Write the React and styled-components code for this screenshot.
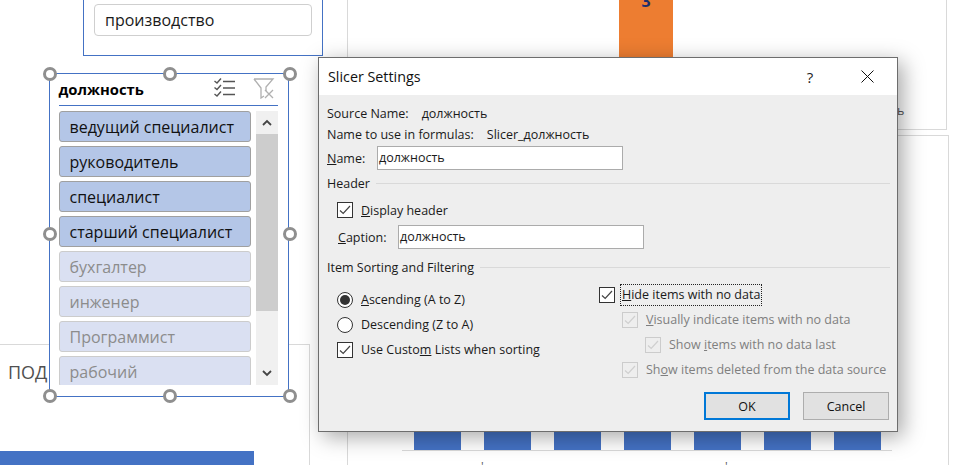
import React from "react";
import styled, { createGlobalStyle } from "styled-components";

const Global = createGlobalStyle`
  html, body { margin: 0; padding: 0; background: #fff; }
  body { font-family: "Open Sans", "Noto Sans", sans-serif; }
`;

const Canvas = styled.div`
  position: relative;
  width: 955px;
  height: 465px;
  overflow: hidden;
  background: #fff;
`;

const ChartPanel = styled.div`
  position: absolute;
  left: ${(p) => p.$x}px;
  top: ${(p) => p.$y}px;
  width: ${(p) => p.$w}px;
  height: ${(p) => p.$h}px;
  box-sizing: border-box;
  border: 1px solid #d9d9d9;
`;

const PanelTitle = styled.div`
  position: absolute;
  left: 12px;
  top: 15px;
  font-size: 18px;
  line-height: 24px;
  color: #505050;
`;

const BlueStrip = styled.div`
  position: absolute;
  left: 0;
  top: 451px;
  width: 254px;
  height: 14px;
  background: #4472c4;
`;

const OrangeBar = styled.div`
  position: absolute;
  left: 619px;
  top: 0;
  width: 54px;
  height: 57px;
  background: #ed7d31;
  display: flex;
  justify-content: center;
`;

const BarValue = styled.span`
  margin-top: -8px;
  font-size: 16px;
  line-height: 18px;
  font-weight: 700;
  color: #1f2f6b;
`;

const BarRow = styled.div`
  position: absolute;
  left: 402px;
  top: 425px;
  width: 490px;
  height: 26px;
  box-sizing: border-box;
  border-bottom: 1px solid #d9d9d9;
  padding-left: 12px;
  display: flex;
  gap: 23px;
`;

const Bar = styled.div`
  width: 47px;
  height: 25px;
  background: #4472c4;
`;

const AxisTick = styled.span`
  position: absolute;
  left: ${(p) => p.$x}px;
  top: 460px;
  font-size: 12px;
  line-height: 14px;
  color: #595959;
`;

const CutLetter = styled.span`
  position: absolute;
  left: 897px;
  top: 103px;
  font-size: 12.5px;
  line-height: 16px;
  color: #595959;
`;

const FilterCard = styled.div`
  position: absolute;
  left: 83px;
  top: -20px;
  width: 240px;
  height: 76px;
  box-sizing: border-box;
  border: 1px solid #4472c4;
  background: #fff;
  padding: 23px 10px 0;
`;

const FilterChip = styled.div`
  height: 32px;
  box-sizing: border-box;
  border: 1px solid #cfcfcf;
  border-radius: 4px;
  padding-left: 10px;
  font-size: 16px;
  line-height: 30px;
  color: #1a1a1a;
`;

const Slicer = styled.div`
  position: absolute;
  left: 49px;
  top: 73px;
  width: 240px;
  height: 324px;
  box-sizing: border-box;
  border: 1.5px solid #4472c4;
  background: #fff;
  padding: 0 10.5px 0 8.5px;
`;

const SlicerHeader = styled.div`
  height: 32px;
  box-sizing: border-box;
  border-bottom: 1px solid #4472c4;
  padding-bottom: 2px;
  display: flex;
  align-items: center;
`;

const SlicerTitle = styled.span`
  flex: 1;
  font-size: 14.8px;
  font-weight: 700;
  color: #000;
`;

const IconGroup = styled.div`
  display: flex;
  gap: 18px;
  margin-right: 3px;
`;

const SlicerBody = styled.div`
  margin-top: 5px;
  height: 274px;
  display: flex;
  gap: 5px;
`;

const ItemList = styled.div`
  flex: 1;
  overflow: hidden;
  display: flex;
  flex-direction: column;
  gap: 4px;
`;

const Item = styled.div`
  flex: none;
  height: 31px;
  box-sizing: border-box;
  border: 1px solid ${(p) => (p.$on ? "#a0a0a0" : "#cccccc")};
  border-radius: 3px;
  background: ${(p) => (p.$on ? "#b4c6e7" : "#dae0f2")};
  color: ${(p) => (p.$on ? "#111" : "#8c8c8c")};
  padding-left: 10px;
  font-size: 16px;
  line-height: 30px;
  white-space: nowrap;
`;

const ScrollBar = styled.div`
  width: 22px;
  background: #f0f0f0;
  display: flex;
  flex-direction: column;
`;

const ScrollArrow = styled.div`
  height: 23px;
  display: flex;
  align-items: center;
  justify-content: center;
`;

const ScrollThumb = styled.div`
  height: 177px;
  background: #cdcdcd;
`;

const ScrollRest = styled.div`
  flex: 1;
`;

const Handle = styled.div`
  position: absolute;
  left: ${(p) => p.$x - 7}px;
  top: ${(p) => p.$y - 7}px;
  width: 14px;
  height: 14px;
  box-sizing: border-box;
  border: 3px solid #8f8f8f;
  border-radius: 50%;
  background: #fff;
`;

const Dialog = styled.div`
  position: absolute;
  left: 318px;
  top: 57px;
  width: 580px;
  height: 375px;
  box-sizing: border-box;
  border: 1px solid #6d6d6d;
  background: #eeeeee;
  box-shadow: 5px 5px 20px rgba(0, 0, 0, 0.35);
  display: flex;
  flex-direction: column;
  font-size: 12.5px;
  color: #1a1a1a;
`;

const TitleBar = styled.div`
  height: 37px;
  background: #fff;
  display: flex;
  align-items: center;
  padding-left: 9px;
`;

const TitleText = styled.span`
  flex: 1;
  font-size: 14.3px;
  color: #111;
`;

const HelpButton = styled.span`
  width: 20px;
  margin-right: 41px;
  text-align: center;
  font-size: 15px;
  color: #222;
`;

const CloseButton = styled.span`
  display: flex;
  margin-right: 23px;
`;

const DialogBody = styled.div`
  flex: 1;
  display: flex;
  flex-direction: column;
  padding: 8px 7px 0 8px;
`;

const InfoRow = styled.div`
  height: 21px;
  display: flex;
  align-items: center;
  white-space: nowrap;
`;

const InfoValue = styled.span`
  margin-left: ${(p) => p.$gap}px;
`;

const FieldRow = styled.div`
  height: 24px;
  margin-top: ${(p) => p.$mt || 0}px;
  padding-left: ${(p) => p.$indent || 0}px;
  display: flex;
  align-items: center;
`;

const FieldLabel = styled.label`
  width: ${(p) => p.$w}px;
  flex: none;
`;

const TextInput = styled.div`
  width: 246px;
  height: 24px;
  box-sizing: border-box;
  border: 1px solid #ababab;
  background: #fff;
  padding-left: 1px;
  line-height: 21px;
`;

const SectionHead = styled.div`
  height: 20px;
  margin-top: ${(p) => p.$mt}px;
  display: flex;
  align-items: center;
  gap: 6px;
`;

const SectionRule = styled.div`
  flex: 1;
  height: 1px;
  background: #d9d9d9;
`;

const OptionRow = styled.div`
  height: 25px;
  margin-left: ${(p) => p.$indent || 0}px;
  display: flex;
  align-items: center;
  gap: 8px;
  white-space: nowrap;
  color: ${(p) => (p.$off ? "#7f7f7f" : "inherit")};
`;

const OptionLabel = styled.span`
  margin-left: 8px;
`;

const Box = styled.span`
  width: 16px;
  height: 16px;
  flex: none;
  box-sizing: border-box;
  border: 1px solid ${(p) => (p.$off ? "#cccccc" : "#333")};
  background: ${(p) => (p.$off ? "#eeeeee" : "#fff")};
  display: flex;
  align-items: center;
  justify-content: center;
`;

const Radio = styled.span`
  width: 16px;
  height: 16px;
  flex: none;
  box-sizing: border-box;
  border: 1px solid #333;
  border-radius: 50%;
  background: #fff;
  display: flex;
  align-items: center;
  justify-content: center;
`;

const RadioDot = styled.span`
  width: 10px;
  height: 10px;
  border-radius: 50%;
  background: #333;
`;

const FocusLabel = styled.span`
  margin-left: -2px;
  padding: 2px 1px;
  outline: 1px dotted #222;
  line-height: 16px;
`;

const Columns = styled.div`
  display: flex;
  margin-top: 5px;
`;

const LeftColumn = styled.div`
  width: 272px;
  padding: 5px 0 0 10px;
  box-sizing: border-box;
`;

const RightColumn = styled.div`
  flex: 1;
`;

const ButtonRow = styled.div`
  display: flex;
  justify-content: flex-end;
  gap: 13px;
  margin: 10px 1px 0 0;
`;

const DialogButton = styled.button`
  width: 86px;
  height: 28px;
  box-sizing: border-box;
  padding: 0;
  border: ${(p) => (p.$primary ? "2px solid #0078d7" : "1px solid #adadad")};
  background: #e1e1e1;
  font: inherit;
  color: #111;
`;

const Check = ({ off }) => (
  <svg width="12" height="10" viewBox="0 0 12 10" fill="none">
    <path d="M1 5.5 L4.2 8.5 L11 1" stroke={off ? "#cfcfcf" : "#444"} strokeWidth="1.2" />
  </svg>
);

const MultiSelectIcon = () => (
  <svg width="21" height="20" viewBox="0 0 21 20" fill="none" stroke="#555" strokeWidth="1.4">
    <path d="M0.5 3 L3 5 L7 0.5 M0.5 9.5 L3 11.5 L7 7 M0.5 16 L3 18 L7 13.5" />
    <path d="M9 3.5 H21 M9 10 H21 M9 16.5 H21" strokeWidth="1.6" />
  </svg>
);

const ClearFilterIcon = () => (
  <svg width="22" height="21" viewBox="0 0 22 21" fill="none" stroke="#b0b0b0" strokeWidth="1.3">
    <path d="M1 1 H20 L13 9 V13 M8 10 L1 1 M8 9.5 V20 L11 18" />
    <path d="M12 12 L20 20 M20 12 L12 20" />
  </svg>
);

const CloseIcon = () => (
  <svg width="13" height="13" viewBox="0 0 13 13" fill="none" stroke="#111" strokeWidth="1">
    <path d="M0.5 0.5 L12.5 12.5 M12.5 0.5 L0.5 12.5" />
  </svg>
);

const Chevron = ({ down }) => (
  <svg width="10" height="7" viewBox="0 0 10 7" fill="none" stroke="#444" strokeWidth="1.8">
    <path d={down ? "M1 1 L5 5 L9 1" : "M1 6 L5 2 L9 6"} />
  </svg>
);

const items = [
  ["ведущий специалист", true],
  ["руководитель", true],
  ["специалист", true],
  ["старший специалист", true],
  ["бухгалтер", false],
  ["инженер", false],
  ["Программист", false],
  ["рабочий", false],
];

const handles = [
  [50, 74], [170, 74], [290, 74],
  [50, 234], [290, 234],
  [50, 396], [170, 396], [290, 396],
];

export default function App() {
  return (
    <Canvas>
      <Global />
      <ChartPanel $x={347} $y={-5} $w={600} $h={135} />
      <ChartPanel $x={347} $y={135} $w={602} $h={340} />
      <ChartPanel $x={-5} $y={344} $w={315} $h={130}>
        <PanelTitle>ПОД</PanelTitle>
      </ChartPanel>
      <BlueStrip />
      <OrangeBar><BarValue>3</BarValue></OrangeBar>
      <CutLetter>ь</CutLetter>
      <BarRow>
        {[0, 1, 2, 3, 4, 5, 6].map((i) => <Bar key={i} />)}
      </BarRow>
      <AxisTick $x={481}>'</AxisTick>
      <AxisTick $x={725}>'</AxisTick>

      <FilterCard>
        <FilterChip>производство</FilterChip>
      </FilterCard>

      <Slicer>
        <SlicerHeader>
          <SlicerTitle>должность</SlicerTitle>
          <IconGroup>
            <MultiSelectIcon />
            <ClearFilterIcon />
          </IconGroup>
        </SlicerHeader>
        <SlicerBody>
          <ItemList>
            {items.map(([label, on]) => <Item key={label} $on={on}>{label}</Item>)}
          </ItemList>
          <ScrollBar>
            <ScrollArrow><Chevron /></ScrollArrow>
            <ScrollThumb />
            <ScrollRest />
            <ScrollArrow><Chevron down /></ScrollArrow>
          </ScrollBar>
        </SlicerBody>
      </Slicer>
      {handles.map(([x, y]) => <Handle key={`${x}-${y}`} $x={x} $y={y} />)}

      <Dialog>
        <TitleBar>
          <TitleText>Slicer Settings</TitleText>
          <HelpButton>?</HelpButton>
          <CloseButton><CloseIcon /></CloseButton>
        </TitleBar>
        <DialogBody>
          <InfoRow>Source Name:<InfoValue $gap={13}>должность</InfoValue></InfoRow>
          <InfoRow>Name to use in formulas:<InfoValue $gap={13}>Slicer_должность</InfoValue></InfoRow>
          <FieldRow $mt={1}>
            <FieldLabel $w={50}><u>N</u>ame:</FieldLabel>
            <TextInput>должность</TextInput>
          </FieldRow>
          <SectionHead $mt={3}>Header<SectionRule /></SectionHead>
          <FieldRow $mt={5} $indent={10}>
            <Box><Check /></Box>
            <OptionLabel><u>D</u>isplay header</OptionLabel>
          </FieldRow>
          <FieldRow $mt={3} $indent={11}>
            <FieldLabel $w={60}><u>C</u>aption:</FieldLabel>
            <TextInput>должность</TextInput>
          </FieldRow>
          <SectionHead $mt={8}>Item Sorting and Filtering<SectionRule /></SectionHead>
          <Columns>
            <LeftColumn>
              <OptionRow><Radio><RadioDot /></Radio><span><u>A</u>scending (A to Z)</span></OptionRow>
              <OptionRow><Radio /><span>Descendin<u>g</u> (Z to A)</span></OptionRow>
              <OptionRow><Box><Check /></Box><span>Use Custo<u>m</u> Lists when sorting</span></OptionRow>
            </LeftColumn>
            <RightColumn>
              <OptionRow><Box><Check /></Box><FocusLabel><u>H</u>ide items with no data</FocusLabel></OptionRow>
              <OptionRow $indent={23} $off><Box $off><Check off /></Box><span><u>V</u>isually indicate items with no data</span></OptionRow>
              <OptionRow $indent={46} $off><Box $off><Check off /></Box><span>Show <u>i</u>tems with no data last</span></OptionRow>
              <OptionRow $indent={23} $off><Box $off><Check off /></Box><span>Sh<u>o</u>w items deleted from the data source</span></OptionRow>
            </RightColumn>
          </Columns>
          <ButtonRow>
            <DialogButton $primary>OK</DialogButton>
            <DialogButton>Cancel</DialogButton>
          </ButtonRow>
        </DialogBody>
      </Dialog>
    </Canvas>
  );
}
